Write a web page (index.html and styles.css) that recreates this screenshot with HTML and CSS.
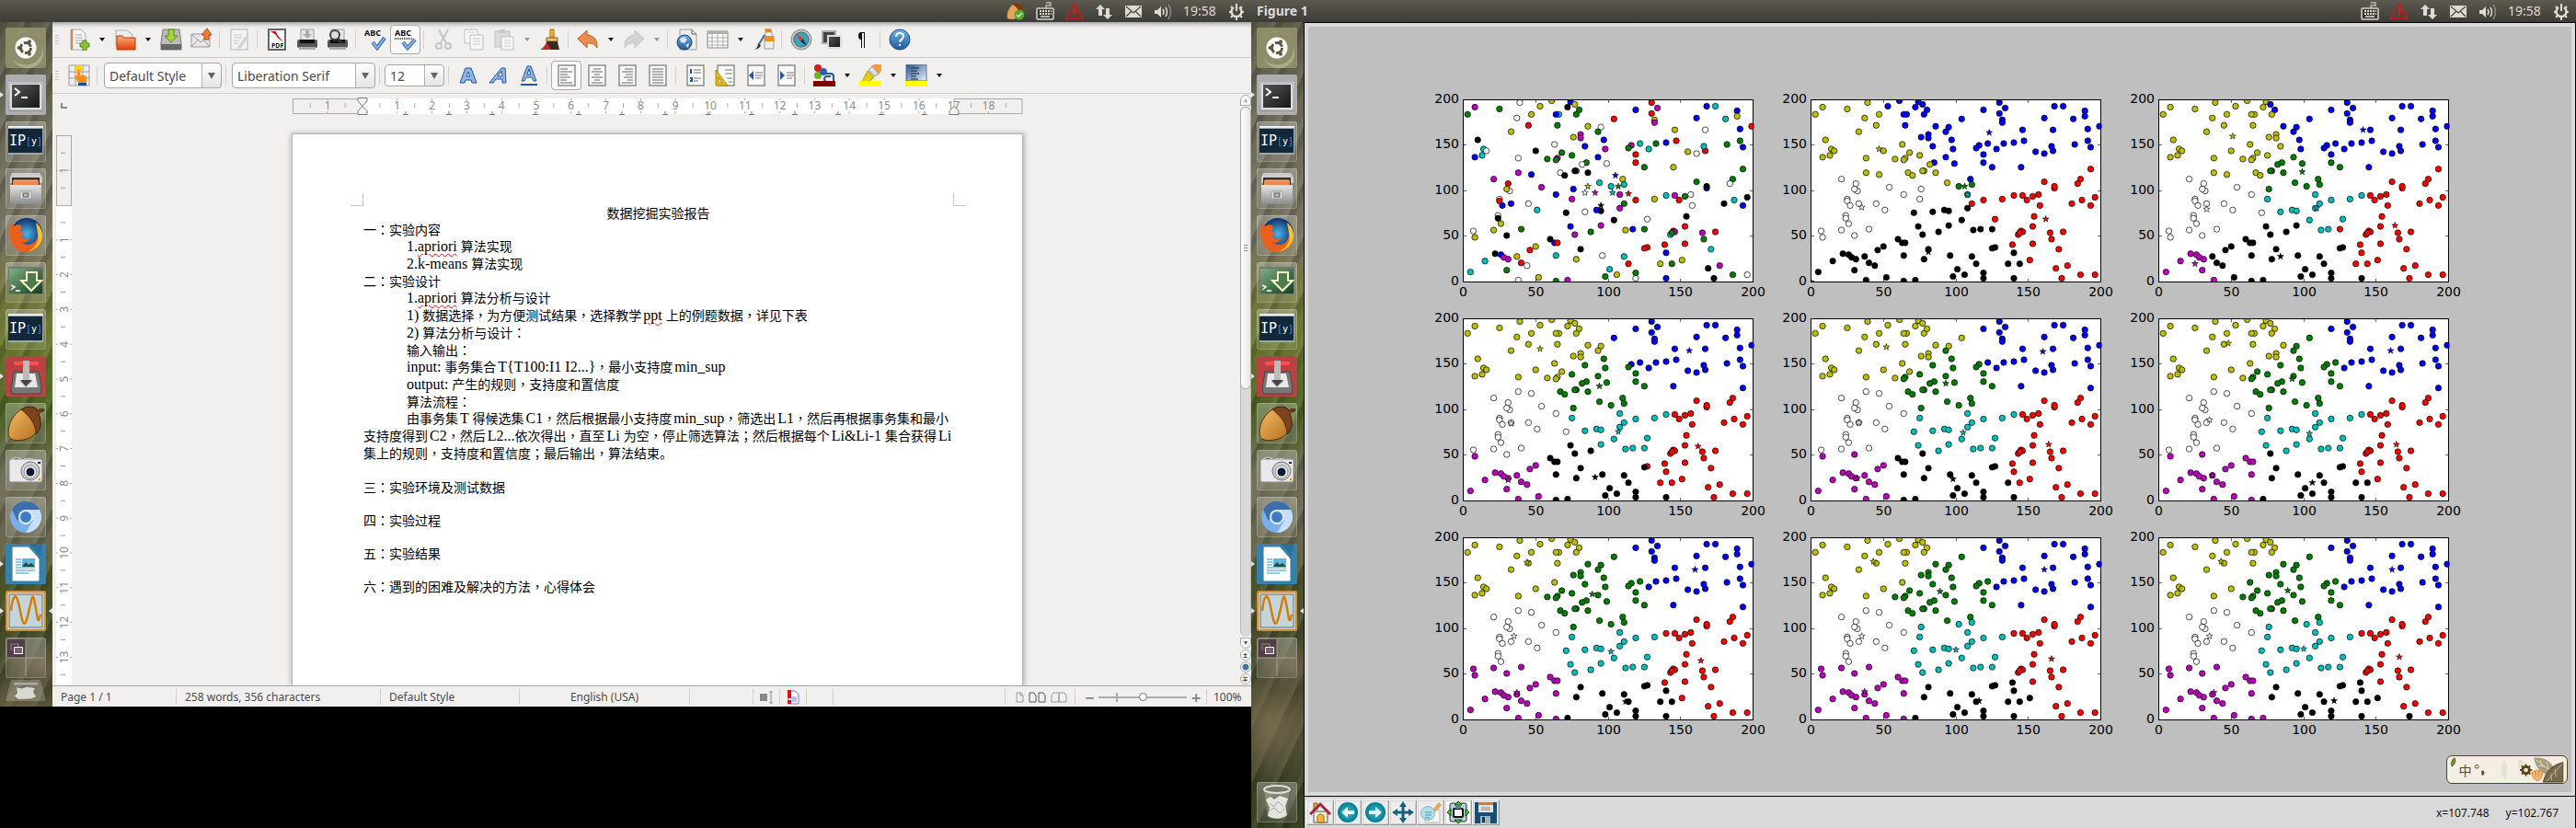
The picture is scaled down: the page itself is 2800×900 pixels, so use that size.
FILE: index.html
```html
<!DOCTYPE html>
<html lang="en">
<head>
<meta charset="utf-8">
<title>Figure 1</title>
<link rel="stylesheet" href="styles.css">
</head>
<body>
<svg class="defs" aria-hidden="true">
<defs>
<linearGradient id="gGrey" x1="0" y1="0" x2="0" y2="1"><stop offset="0" stop-color="#e6e6e6"/><stop offset="1" stop-color="#8b8b8b"/></linearGradient>
<linearGradient id="gDark" x1="0" y1="0" x2="1" y2="1"><stop offset="0" stop-color="#555"/><stop offset="1" stop-color="#161616"/></linearGradient>
<linearGradient id="gOrange" x1="0" y1="0" x2="0" y2="1"><stop offset="0" stop-color="#fbb07a"/><stop offset="1" stop-color="#e2410b"/></linearGradient>
<linearGradient id="gAcorn" x1="0" y1="0" x2="1" y2="1"><stop offset="0" stop-color="#f3bd63"/><stop offset="1" stop-color="#b86f1f"/></linearGradient>
<linearGradient id="gBlue" x1="0" y1="0" x2="0" y2="1"><stop offset="0" stop-color="#6fb0e4"/><stop offset="1" stop-color="#1c5a9c"/></linearGradient>
<linearGradient id="gPara" x1="0" y1="0" x2="1" y2="1"><stop offset="0" stop-color="#1d5396"/><stop offset="1" stop-color="#f0f4f8"/></linearGradient>
<linearGradient id="gGreen" x1="0" y1="0" x2="1" y2="1"><stop offset="0" stop-color="#7fae83"/><stop offset="1" stop-color="#143d1e"/></linearGradient>
<radialGradient id="gTeal"><stop offset="0" stop-color="#35c0d3"/><stop offset="1" stop-color="#08798f"/></radialGradient>
<radialGradient id="gFox"><stop offset="0" stop-color="#4db4ea"/><stop offset="1" stop-color="#0b2f6b"/></radialGradient>
</defs>
<symbol id="l-ubuntu" viewBox="0 0 44 44"><rect width="44" height="44" rx="3" fill="#8f8d69"/><path d="M4 24A18 17 0 0 1 40 18A15 14 0 0 0 4 24M40 22A18 17 0 0 1 8 34A16 15 0 0 0 40 22" fill="#aaa98b"/><circle cx="22" cy="22" r="11.500" fill="#fff"/><circle cx="22" cy="22" r="5.500" fill="none" stroke="#5b5940" stroke-width="3" stroke-dasharray="9.500 2"/><g fill="#5b5940"><circle cx="14.500" cy="22" r="2"/><circle cx="26" cy="15.300" r="2"/><circle cx="26" cy="28.700" r="2"/></g></symbol>
<symbol id="l-term" viewBox="0 0 44 44"><rect width="44" height="44" rx="3" fill="#adadb0"/><rect x="3" y="8" width="38" height="32" rx="2" fill="url(#gGrey)"/><rect x="4" y="9" width="36" height="30" rx="1" fill="#ddd" stroke="#999"/><rect x="7" y="11" width="30" height="25" fill="url(#gDark)"/><path d="M10 15l5 4-5 4" fill="none" stroke="#fff" stroke-width="2"/><path d="M17 25h7" stroke="#fff" stroke-width="2"/></symbol>
<symbol id="l-ipy" viewBox="0 0 44 44"><rect x="3" y="6" width="38" height="30" fill="#9ba8b0"/><rect x="3" y="8" width="37" height="26" fill="#12273a"/><path d="M3 6h38" stroke="#eee" stroke-width="2"/></symbol>
<symbol id="l-files" viewBox="0 0 44 44"><path d="M7 5h30l3 5v6H5v-6z" fill="#ccc"/><rect x="7" y="10" width="30" height="9" fill="#3a2c25"/><path d="M8 13h28v6H8z" fill="#f0864a"/><path d="M9 13h26" stroke="#ffc39a"/><rect x="5" y="18" width="34" height="21" rx="1" fill="url(#gGrey)"/><rect x="16" y="25" width="12" height="8" rx="1" fill="#e4e4e4" stroke="#999"/><rect x="19" y="27" width="6" height="4" fill="#bbb" stroke="#555"/></symbol>
<symbol id="l-fox" viewBox="0 0 44 44"><circle cx="23" cy="20" r="17" fill="url(#gFox)"/><path d="M4 18c0-4 1-7 3-10l2 4c4-3 8-2 9 1l-2 4c1 2 3 2 4 2l-3 4c1 3 7 3 9 1-1 5-6 7-9 5 5 5 17 4 18-8 1-5-1-9-2-12 5 4 7 9 7 14 0 10-8 17-18 17S4 32 4 18z" fill="#e8601c"/><path d="M33 8c5 4 7 9 7 14 0 9-7 16-15 17 9-5 12-12 10-20z" fill="#fbc22d"/></symbol>
<symbol id="l-down" viewBox="0 0 44 44"><rect x="3" y="5" width="38" height="30" fill="#717b73"/><rect x="4" y="7" width="36" height="27" fill="url(#gGreen)"/><path d="M23 11h11v9h5L28 31 17 20h6z" fill="#4c7b52" stroke="#f7f6c0" stroke-width="2"/><path d="M6 25l4 2-4 3M11 31h5" fill="none" stroke="#fff" stroke-width="1.500"/></symbol>
<symbol id="l-inst" viewBox="0 0 44 44"><rect width="44" height="44" rx="3" fill="#ba4141"/><rect x="9" y="6" width="27" height="4" rx="2" fill="#ff4e4e"/><path d="M9 17h27l3 18-1 6H7l-1-6z" fill="#777" stroke="#494949"/><path d="M12 19h20l3 15H10z" fill="#e8e8e8"/><path d="M19 5h7v22h4l-8 7-7-7h4z" fill="#bbb"/><path d="M16 26h13l-7 7z" fill="#444"/></symbol>
<symbol id="l-acorn" viewBox="0 0 44 44"><path d="M17 7C25 2 34 4 35 9c1-2 3-3 7-2l-1 2c-3 0-4 1-5 3 4 9 2 18-3 22z" fill="#7d431e" stroke="#3b1d0a"/><path d="M17 7C9 12 3 22 3 33c0 4 2 6 5 7 9 2 22-1 25-8C32 22 26 14 17 7z" fill="url(#gAcorn)" stroke="#55300d"/></symbol>
<symbol id="l-cam" viewBox="0 0 44 44"><rect x="4" y="10" width="36" height="25" rx="2" fill="#e9e9eb" stroke="#8a8a8c"/><path d="M7 10q5-3 10 0M20 10h10" stroke="#bbb" stroke-width="2"/><circle cx="27" cy="23" r="10" fill="#d0d0d2" stroke="#777"/><circle cx="27" cy="24" r="7" fill="#eee" stroke="#888"/><circle cx="27" cy="24" r="4.500" fill="#0d1b36"/><rect x="35" y="13" width="3" height="2" fill="#222"/><circle cx="37" cy="32" r="1.500" fill="#e59a20"/></symbol>
<symbol id="l-chrome" viewBox="0 0 44 44"><circle cx="22" cy="22" r="17" fill="#7aaee6"/><path d="M7 14A17 17 0 0 1 37 14H22L13 26z" fill="#3e6fab"/><path d="M22 14h15a17 17 0 0 1-15 25l8-13z" fill="#c8dff8"/><circle cx="22" cy="22" r="8" fill="#dcebfb"/><circle cx="22" cy="22" r="6" fill="#3f7ac6"/></symbol>
<symbol id="l-writer" viewBox="0 0 44 44"><rect width="44" height="44" rx="3" fill="#3782ad"/><path d="M26 0h14l-2 14z" fill="#2a6f98"/><path d="M7 3h18l12 13v25H7z" fill="#fff" stroke="#2f7aa5"/><g stroke="#2b95c4"><path d="M11 17h6M11 20h6M11 23h6M11 26h21M11 29h21M11 32h14"/></g><rect x="18" y="16" width="14" height="9" fill="#5cb4e0"/><path d="M18 25l4-5 3 3 3-2 4 4z" fill="#274c2a"/></symbol>
<symbol id="l-mpl" viewBox="0 0 44 44"><rect width="44" height="44" rx="3" fill="#c99139"/><rect x="3" y="3" width="38" height="38" fill="#c4d4d8" stroke="#fff"/><rect x="4" y="4" width="36" height="36" fill="none" stroke="#5d6b78"/><path d="M6 22C8 4 11 2 14 13s5 35 10 15 5-29 8-14 3 25 6 12" fill="none" stroke="#d17d0b" stroke-width="2.500"/></symbol>
<symbol id="l-work" viewBox="0 0 44 44"><rect x="2" y="2" width="20" height="20" fill="#523f43"/><path d="M22 2v40M2 22h40" stroke="#a5a595"/><path d="M6 14V7h8v3" fill="none" stroke="#888"/><rect x="9.500" y="10.500" width="9" height="7" fill="#7c5f70" stroke="#fff"/></symbol>
<symbol id="l-trash" viewBox="0 0 44 44"><path d="M8 8l4 30q10 4 19 0l5-30z" fill="#d2d2ca" opacity=".3"/><path d="M10 19l5-3 4 3 6-4 9 3-3 8 2 10q-10 7-21 1l2-9z" fill="#e4e4e1"/><path d="M14 23l5 4 4-6 6 6M13 32l6-4 6 6 5-5" fill="none" stroke="#aaa"/><ellipse cx="22" cy="8" rx="14" ry="4" fill="#77786a" stroke="#e0e0da" stroke-width="2"/></symbol>

<symbol id="p-key" viewBox="0 0 20 22"><path d="M11 8V5h5V2h-5" fill="none" stroke="#bbb8b0" stroke-width="1.500"/><rect x="1" y="8" width="18" height="12" rx="1" fill="#3a3935" stroke="#d6d3cb" stroke-width="1.500"/><path d="M4 11h13M4 14h13" stroke="#dfdbd2" stroke-width="2" stroke-dasharray="2 1"/><path d="M5 17h10" stroke="#dfdbd2" stroke-width="1.500"/></symbol>
<symbol id="p-warn" viewBox="0 0 20 22"><path d="M10 3L19 19H1z" fill="none" stroke="#e01010" stroke-width="1.500"/><path d="M10 8v6M10 15.500v2" stroke="#f01010" stroke-width="2"/></symbol>
<symbol id="p-net" viewBox="0 0 20 22"><path d="M6 4l5 5H8v7H4V9H1zM14 20l-5-5h3V8h4v7h3z" fill="#dfdbd2"/></symbol>
<symbol id="p-mail" viewBox="0 0 20 22"><rect x="1" y="5" width="18" height="13" fill="#dfdbd2"/><path d="M2 6l8 7 8-7M2 17l6-6M18 17l-6-6" fill="none" stroke="#494843" stroke-width="1.300"/></symbol>
<symbol id="p-vol" viewBox="0 0 20 22"><path d="M1 10h3l4-4v12l-4-4H1z" fill="#dfdbd2"/><path d="M10 9q2 3 0 6M13 7q3 5 0 10" fill="none" stroke="#dfdbd2" stroke-width="1.500"/><path d="M16 4q5 8 0 16" fill="none" stroke="#8b8981" stroke-width="1.500"/></symbol>
<symbol id="p-gear" viewBox="0 0 20 22"><path d="M13 7a5.500 5.500 0 1 1-6 0" fill="none" stroke="#dfdbd2" stroke-width="2.500"/><path d="M10 3v8" stroke="#dfdbd2" stroke-width="2"/><path d="M4 6l2 2M16 6l-2 2M2 12h3M15 12h3M4 18l2-2M16 18l-2-2M10 17v4" stroke="#dfdbd2" stroke-width="2"/></symbol>
<symbol id="p-acorn" viewBox="0 0 20 22"><path d="M7 4c4-3 8-1 8 1l4-2-2 5q2 5-2 8z" fill="#7b3c12"/><path d="M7 4C2 8 0 14 1 19q8 3 13-3Q13 7 7 4z" fill="#e6a456"/><circle cx="14" cy="15" r="5.500" fill="#4bae24"/><path d="M11 15l2 2 4-4" fill="none" stroke="#fff" stroke-width="1.500"/></symbol>
<symbol id="page" viewBox="0 0 24 24"><path d="M3 1h18v22H3z" fill="#fafafa" stroke="#8c8f88" stroke-width="1.500"/></symbol>
</svg>

<section class="screen writer-screen">
  <header class="panel">
    <div class="indicators">
      <svg><use href="#p-acorn"/></svg><svg><use href="#p-key"/></svg><svg><use href="#p-warn"/></svg><svg><use href="#p-net"/></svg><svg><use href="#p-mail"/></svg><svg><use href="#p-vol"/></svg><time>19:58</time><svg><use href="#p-gear"/></svg>
    </div>
  </header>
  <div class="desk">
    <nav class="launcher">
      <a class="tile" href="#"><svg><use href="#l-ubuntu"/></svg></a>
      <a class="tile open" href="#"><svg><use href="#l-term"/></svg></a>
      <a class="tile" href="#"><svg><use href="#l-ipy"/><text x="4" y="26" class="ip">IP</text><text x="22" y="25" class="br">[<tspan>y</tspan>]</text></svg></a>
      <a class="tile" href="#"><svg><use href="#l-files"/></svg></a>
      <a class="tile" href="#"><svg><use href="#l-fox"/></svg></a>
      <a class="tile" href="#"><svg><use href="#l-down"/></svg></a>
      <a class="tile" href="#"><svg><use href="#l-ipy"/><text x="4" y="26" class="ip">IP</text><text x="22" y="25" class="br">[<tspan>y</tspan>]</text></svg></a>
      <a class="tile open" href="#"><svg><use href="#l-inst"/></svg></a>
      <a class="tile" href="#"><svg><use href="#l-acorn"/></svg></a>
      <a class="tile" href="#"><svg><use href="#l-cam"/></svg></a>
      <a class="tile" href="#"><svg><use href="#l-chrome"/></svg></a>
      <a class="tile open" href="#"><svg><use href="#l-writer"/></svg></a>
      <a class="tile open focused" href="#"><svg><use href="#l-mpl"/></svg></a>
      <a class="tile" href="#"><svg><use href="#l-work"/></svg></a>
      <a class="tile folded" href="#"><svg preserveAspectRatio="none" viewBox="0 0 44 44"><path d="M6 0h32l6 44H0z" fill="#fff" opacity=".2"/><path d="M12 16l6 2 5-3 9 2-2 8 3 10-6 4-13 1-4-6 3-7z" fill="#d8d8d4"/><path d="M9 8h26" stroke="#aaa" stroke-width="5"/></svg></a>
    </nav>
    <main class="writer">
      <div class="toolbar">
        <i class="grip"></i>
        <button class="ico" aria-label="New"><svg viewBox="0 0 24 24"><path d="M3 1h11l5 5v17H3z" fill="#f4f4f4" stroke="#aaa"/><path d="M4 1v22" stroke="#e77f4c" stroke-width="2"/><path d="M8 7h7M8 10h8M8 13h8M8 16h5" stroke="#aaa"/><path d="M16 13h4v3h3v4h-3v4h-4v-4h-3v-4h3z" fill="#8cc63a" stroke="#4b8a10"/></svg></button><button class="drop" aria-label="New menu"></button>
        <button class="ico" aria-label="Open"><svg viewBox="0 0 24 24"><path d="M2 2h12l6 5v12H2z" fill="#eee" stroke="#aaa"/><path d="M3 8h6l2 2h12v13H3z" fill="url(#gOrange)" stroke="#b53b0b"/></svg></button><button class="drop" aria-label="Open menu"></button>
        <button class="ico" aria-label="Save"><svg viewBox="0 0 24 24"><path d="M3 1h18l2 15v7H1v-7z" fill="#bbb" stroke="#777"/><path d="M1 17h22v6H1z" fill="#666"/><path d="M9 1h6v7h4l-7 7-7-7h4z" fill="#a7d33d" stroke="#598a12"/></svg></button>
        <button class="ico" aria-label="Mail"><svg viewBox="0 0 24 24"><path d="M1 6h20v14H1z" fill="#e7e7e7" stroke="#999"/><path d="M1 6l10 9 10-9M1 20l7-8M21 20l-7-8" fill="none" stroke="#999"/><path d="M15 12V7h-3l6-7 5 7h-3v5z" fill="#ee7b3a" stroke="#b34910"/></svg></button>
        <i class="sep"></i>
        <button class="ico faded" aria-label="Edit"><svg viewBox="0 0 24 24"><use href="#page"/><path d="M6 7h9M6 10h9M6 13h6M6 16h5" stroke="#888"/><path d="M11 19l8-11 3 2-8 11-4 1z" fill="#aaa"/></svg></button>
        <i class="sep"></i>
        <button class="ico" aria-label="Export PDF"><svg viewBox="0 0 24 24"><path d="M3 1h18v22H3z" fill="#fff" stroke="#666" stroke-width="2"/><path d="M5 3h6q1 5 8 11-7-3-8-7z" fill="#d8131c"/><text x="6" y="21" font-size="7" font-weight="700">PDF</text></svg></button>
        <button class="ico" aria-label="Print"><svg viewBox="0 0 24 24"><path d="M5 1h14v12H5z" fill="#e6e6e6" stroke="#999"/><path d="M10 2h4v4h3l-5 5-5-5h3z" fill="#aaa"/><rect x="1" y="12" width="22" height="9" rx="2" fill="#555"/><rect x="4" y="12" width="16" height="4" fill="#111"/><rect x="3" y="20" width="18" height="3" fill="#aaa"/></svg></button>
        <button class="ico" aria-label="Preview"><svg viewBox="0 0 24 24"><path d="M5 1h14v12H5z" fill="#e6e6e6" stroke="#999"/><rect x="1" y="12" width="22" height="9" rx="2" fill="#555"/><rect x="4" y="12" width="16" height="4" fill="#111"/><rect x="3" y="20" width="18" height="3" fill="#aaa"/><circle cx="9" cy="7" r="5" fill="#ddd" stroke="#444" stroke-width="2"/><path d="M12 11l5 5" stroke="#333" stroke-width="3"/></svg></button>
        <i class="sep"></i>
        <button class="ico" aria-label="Spelling"><svg viewBox="0 0 24 24"><text x="0" y="8" font-size="9" font-weight="700">ABC</text><path d="M9 15l5 6 8-11" fill="none" stroke="#2d5a9b" stroke-width="4"/><path d="M9 15l5 6 8-11" fill="none" stroke="#8db6e8" stroke-width="2"/></svg></button>
        <button class="ico pressed" aria-label="AutoSpellcheck"><svg viewBox="0 0 24 24"><text x="0" y="8" font-size="9" font-weight="700">ABC</text><path d="M0 11h20" stroke="#e01010" stroke-width="2" stroke-dasharray="1 1"/><path d="M9 15l5 6 8-9" fill="none" stroke="#2d5a9b" stroke-width="4"/><path d="M9 15l5 6 8-9" fill="none" stroke="#8db6e8" stroke-width="2"/></svg></button>
        <i class="sep"></i>
        <button class="ico faded" aria-label="Cut"><svg viewBox="0 0 24 24"><path d="M7 1l8 15M17 1L9 16" stroke="#888" stroke-width="2"/><g fill="none" stroke="#888" stroke-width="2"><circle cx="7" cy="19" r="3"/><circle cx="17" cy="19" r="3"/></g></svg></button>
        <button class="ico faded" aria-label="Copy"><svg viewBox="0 0 24 24"><path d="M2 1h14v15H2z" fill="#fff" stroke="#777"/><path d="M8 7h14v16H8z" fill="#fff" stroke="#777"/><path d="M5 4h8M11 11h8M11 14h8M11 17h8" stroke="#999"/></svg></button>
        <button class="ico faded" aria-label="Paste"><svg viewBox="0 0 24 24"><path d="M2 3h16v17H2z" fill="#bbb" stroke="#777"/><path d="M7 1h6v4H7z" fill="#888"/><path d="M9 9h13v14H9z" fill="#fff" stroke="#777"/><path d="M12 13h7M12 16h7M12 19h7" stroke="#999"/></svg></button><button class="drop faded" aria-label="Paste menu"></button>
        <button class="ico" aria-label="Clone"><svg viewBox="0 0 24 24"><path d="M12 1h4v9h-4z" fill="#f4b13a" stroke="#a36b10"/><path d="M8 10h12v4H8z" fill="#e8c06a" stroke="#7b5a22"/><path d="M8 14h12l2 9H7z" fill="#3c2a28"/><path d="M1 23q5-3 7-8l5 8z" fill="#e01f26"/></svg></button>
        <i class="sep"></i>
        <button class="ico" aria-label="Undo"><svg viewBox="0 0 24 24"><path d="M1 11L11 2v5q12 1 11 14-3-6-11-5v5z" fill="#ee8a4d" stroke="#c35c1d"/></svg></button><button class="drop" aria-label="Undo menu"></button>
        <button class="ico faded" aria-label="Redo"><svg viewBox="0 0 24 24"><path d="M23 11L13 2v5Q1 8 2 21q3-6 11-5v5z" fill="#aaa" stroke="#888"/></svg></button><button class="drop faded" aria-label="Redo menu"></button>
        <i class="sep"></i>
        <button class="ico" aria-label="Hyperlink"><svg viewBox="0 0 24 24"><path d="M4 1h13l5 5v17H4z" fill="#eee" stroke="#999"/><path d="M17 1v5h5" fill="none" stroke="#555"/><circle cx="9" cy="15" r="8" fill="url(#gBlue)" stroke="#1c447a"/><path d="M4 11l5-2 3 3-3 4-4-1zM10 18l4-2-1 5z" fill="#dbe9f6"/></svg></button>
        <button class="ico" aria-label="Table"><svg viewBox="0 0 24 24"><path d="M1 3h22v18H1z" fill="#fff" stroke="#888"/><path d="M1 3h22v3H1z" fill="#a9b5a3"/><path d="M1 10h22M1 14h22M1 18h22M6 6v15M12 6v15M18 6v15" stroke="#aaa"/></svg></button><button class="drop" aria-label="Table menu"></button>
        <button class="ico" aria-label="Draw"><svg viewBox="0 0 24 24"><path d="M14 1h6l1 5 2 2v14H13V8l1-2z" fill="#f0f0f0" stroke="#999"/><path d="M14 0h6v4h-6zM13 8h10v6H13z" fill="#f08a1c"/><path d="M13 7L7 17" stroke="#4a69a5" stroke-width="2"/><path d="M2 23q4-2 4-7l3 2q-1 4-7 5z" fill="#333"/></svg></button>
        <i class="sep"></i>
        <button class="ico" aria-label="Navigator"><svg viewBox="0 0 24 24"><circle cx="12" cy="12" r="11" fill="#bdc3c4" stroke="#888"/><circle cx="12" cy="12" r="8" fill="#3aa5bb" stroke="#4b6871"/><path d="M6 5l8 6-3 3z" fill="#e03b28"/><path d="M18 19l-4-8-3 3z" fill="#0e3b66"/></svg></button>
        <button class="ico" aria-label="Gallery"><svg viewBox="0 0 24 24"><path d="M2 3h14v13H2z" fill="#444" stroke="#aaa" stroke-width="2"/><path d="M8 8h14v13H8z" fill="url(#gDark)" stroke="#ddd" stroke-width="2"/></svg></button>
        <button class="ico" aria-label="Marks"><svg viewBox="0 0 24 24"><path d="M9 4h6v17h-1V5h-2v16h-1v-9Q8 12 8 8t3-4z" fill="#111"/></svg></button>
        <i class="sep"></i>
        <button class="ico" aria-label="Help"><svg viewBox="0 0 24 24"><circle cx="12" cy="12" r="11" fill="url(#gBlue)" stroke="#1d5287"/><path d="M8 9q0-4 4-4t4 3q0 2-2 4-2 1-2 3" fill="none" stroke="#fff" stroke-width="2"/><path d="M11 17h2v2h-2z" fill="#fff"/></svg></button>
      </div>
      <div class="toolbar">
        <i class="grip"></i>
        <button class="ico" aria-label="Styles"><svg viewBox="0 0 24 24"><path d="M1 1h22v22H1zM1 8h22M1 15h22M8 1v22M16 1v22" fill="#eee" stroke="#999"/><path d="M8 1h8v7H8z" fill="#f7d708"/><path d="M10 6h3v6h6q2 1 1 8h-9l-4-7q1-2 3 0z" fill="#ff8d1e"/><path d="M11 20h9v3h-9z" fill="#1a4f96"/></svg></button>
        <i class="sep"></i>
        <label class="combo style"><select aria-label="Paragraph style"><option>Default Style</option></select></label>
        <i class="sep"></i>
        <label class="combo font"><select aria-label="Font name"><option>Liberation Serif</option></select></label>
        <i class="sep"></i>
        <label class="combo size"><select aria-label="Font size"><option>12</option></select></label>
        <i class="sep"></i>
        <button class="ico" aria-label="Bold"><svg viewBox="0 0 24 24"><path d="M3 20L9 4h6l6 16h-5l-1-3H9l-1 3zM10 13h4l-2-5z" fill="#8fb7e6" stroke="#24569c"/></svg></button>
        <button class="ico" aria-label="Italic"><svg viewBox="0 0 24 24"><path d="M2 20L15 4h4l1 16h-4v-4H9l-3 4zM11 13h5l-1-6z" fill="#8fb7e6" stroke="#24569c"/></svg></button>
        <button class="ico" aria-label="Underline"><svg viewBox="0 0 24 24"><path d="M4 18L10 2h4l6 16h-3l-2-4H9l-2 4zM10 11h4l-2-6z" fill="#8fb7e6" stroke="#24569c"/><path d="M3 22h18" stroke="#24569c" stroke-width="2"/></svg></button>
        <i class="sep"></i>
        <button class="ico pressed" aria-label="Align left"><svg viewBox="0 0 24 24"><use href="#page"/><path d="M5 5h8M5 8h13M5 11h8M5 14h11M5 17h7M5 20h13" stroke="#666"/></svg></button>
        <button class="ico" aria-label="Centre"><svg viewBox="0 0 24 24"><use href="#page"/><path d="M8 5h8M6 8h12M9 11h6M6 14h12M9 17h6M6 20h12" stroke="#666"/></svg></button>
        <button class="ico" aria-label="Align right"><svg viewBox="0 0 24 24"><use href="#page"/><path d="M9 5h9M6 8h12M10 11h8M8 14h10M12 17h6M6 20h12" stroke="#666"/></svg></button>
        <button class="ico" aria-label="Justify"><svg viewBox="0 0 24 24"><use href="#page"/><path d="M6 5h12M6 8h12M6 11h12M6 14h12M6 17h12M6 20h12" stroke="#666"/></svg></button>
        <i class="sep"></i>
        <button class="ico" aria-label="Numbering"><svg viewBox="0 0 24 24"><use href="#page"/><path d="M10 6h8M10 9h8M10 15h8M10 18h5" stroke="#777"/><path d="M7 5v5M6 15h2v3h-2" fill="none" stroke="#24569c" stroke-width="2"/></svg></button>
        <button class="ico" aria-label="Bullets"><svg viewBox="0 0 24 24"><use href="#page"/><path d="M11 6h8M11 10h8M13 15h6M15 19h4" stroke="#777"/><path d="M1 6v17h13zM4 14v6h4z" fill="#e2bd18" fill-rule="evenodd" stroke="#a98a08"/></svg></button>
        <button class="ico" aria-label="Decrease indent"><svg viewBox="0 0 24 24"><use href="#page"/><path d="M11 9h8M11 12h8M11 15h6" stroke="#777"/><path d="M9 7v10l-5-5z" fill="#24569c"/></svg></button>
        <button class="ico" aria-label="Increase indent"><svg viewBox="0 0 24 24"><use href="#page"/><path d="M12 9h8M12 12h8M12 15h6" stroke="#777"/><path d="M5 7v10l5-5z" fill="#24569c"/></svg></button>
        <i class="sep"></i>
        <button class="ico" aria-label="Font colour"><svg viewBox="0 0 24 24"><circle cx="5" cy="4" r="4" fill="#d91d1d"/><circle cx="5" cy="12" r="4" fill="#66b824"/><circle cx="11" cy="8" r="4" fill="#3060b0"/><path d="M13 10h6q3 0 3 3v6h-7q-3 0-3-3t3-3h4" fill="none" stroke="#2d5596" stroke-width="2"/><path d="M0 18h24v6H0z" fill="#800000"/></svg></button><button class="drop" aria-label="Font colour menu"></button>
        <button class="ico" aria-label="Highlight"><svg viewBox="0 0 24 24"><path d="M13 2l3-2h8v7l-4 5z" fill="#ff9a3b"/><path d="M14 2l7 8-4 3-7-7z" fill="#ddd" stroke="#999"/><path d="M9 7l7 7-6 5H3z" fill="#e8c916" stroke="#b99a05"/><path d="M0 18h24v6H0z" fill="#ff0"/></svg></button><button class="drop" aria-label="Highlight menu"></button>
        <button class="ico" aria-label="Background"><svg viewBox="0 0 24 24"><path d="M1 0h22v18H1z" fill="url(#gPara)" stroke="#678"/><path d="M6 4h9M6 7h7M6 10h9M6 13h6M6 16h8" stroke="#123"/><path d="M0 18h24v6H0z" fill="#ff0"/></svg></button><button class="drop" aria-label="Background menu"></button>
      </div>
      <div class="work">
        <div class="side"><i class="tabmark"></i><svg id="vruler" class="vruler"></svg></div>
        <div class="canvas">
          <svg id="hruler" class="hruler" viewBox="0 0 795 24"></svg>
          <article class="page">
            <i class="corner tl"></i><i class="corner tr"></i>
            <p class="title">数据挖掘实验报告</p>
            <p>一<span class="mid">：</span>实验内容</p>
            <p class="in mix"><span class="en">1.<u>apriori</u> </span>算法实现</p>
            <p class="in mix"><span class="en">2.k-means </span>算法实现</p>
            <p>二<span class="mid">：</span>实验设计</p>
            <p class="in mix"><span class="en">1.<u>apriori</u> </span>算法分析与设计</p>
            <p class="in mix"><span class="en">1) </span>数据选择<span class="mid">，</span>为方便测试结果<span class="mid">，</span>选择教学<span class="en pre"><u>ppt</u> </span>上的例题数据<span class="mid">，</span>详见下表</p>
            <p class="in mix"><span class="en">2) </span>算法分析与设计<span class="mid">：</span></p>
            <p class="in">输入输出<span class="mid">：</span></p>
            <p class="in mix"><span class="en">input: </span>事务集合<span class="en pre">T{T100:I1 I2...}</span><span class="mid">，</span>最小支持度<span class="en pre">min_sup</span></p>
            <p class="in mix"><span class="en">output: </span>产生的规则<span class="mid">，</span>支持度和置信度</p>
            <p class="in">算法流程<span class="mid">：</span></p>
            <p class="in mix">由事务集<span class="en pre">T </span>得候选集<span class="en pre">C1</span><span class="mid">，</span>然后根据最小支持度<span class="en pre">min_sup</span><span class="mid">，</span>筛选出<span class="en pre">L1</span><span class="mid">，</span>然后再根据事务集和最小</p>
            <p class="mix">支持度得到<span class="en pre">C2</span><span class="mid">，</span>然后<span class="en pre">L2...</span>依次得出<span class="mid">，</span>直至<span class="en pre">Li </span>为空<span class="mid">，</span>停止筛选算法<span class="mid">；</span>然后根据每个<span class="en pre">Li&amp;Li-1 </span>集合获得<span class="en pre">Li</span></p>
            <p class="mix">集上的规则<span class="mid">，</span>支持度和置信度<span class="mid">；</span>最后输出<span class="mid">，</span>算法结束。</p>
            <p class="blank"></p>
            <p>三<span class="mid">：</span>实验环境及测试数据</p>
            <p class="blank"></p>
            <p>四<span class="mid">：</span>实验过程</p>
            <p class="blank"></p>
            <p>五<span class="mid">：</span>实验结果</p>
            <p class="blank"></p>
            <p>六<span class="mid">：</span>遇到的困难及解决的方法<span class="mid">，</span>心得体会</p>
          </article>
        </div>
        <div class="scroll">
          <button class="step up" aria-label="Scroll up"></button>
          <div class="trough"><div class="thumb"></div></div>
          <button class="step down" aria-label="Scroll down"></button>
          <button class="dot" aria-label="Previous page">±</button>
          <button class="dot nav" aria-label="Navigation"></button>
          <button class="dot" aria-label="Next page">∓</button>
        </div>
      </div>
      <footer class="status">
        <span class="s-page">Page 1 / 1</span>
        <span class="s-words">258 words, 356 characters</span>
        <span class="s-style">Default Style</span>
        <span class="s-lang">English (USA)</span>
        <span class="s-gap"></span>
        <span class="s-ico"><svg viewBox="0 0 16 16"><path d="M1 4h8v8H1z" fill="#888"/><path d="M11 2h4M13 2v12M11 14h4" stroke="#888"/></svg></span>
        <span class="s-ico"><svg viewBox="0 0 16 16"><path d="M3 1h7l4 4v10H3z" fill="#fff" stroke="#77d"/><path d="M6 8h6M6 10h6M6 12h6" stroke="#77d"/><path d="M2 0h4v9H2zM2 11h4v4H2z" fill="#e01010"/></svg></span>
        <span class="s-ico"></span>
        <span class="s-fill"></span>
        <span class="s-views"><svg viewBox="0 0 56 12" fill="none"><path d="M1 1h5l2 3v7H1zM5 1v3h3M39 11V4l2-3h6v10zM47 11V1h6l2 3v7z" stroke="#999"/><path d="M15 1h5l2 3v7h-7zM25 1h5l2 3v7h-7z" stroke="#555"/></svg></span>
        <span class="s-zoom"><button aria-label="Zoom out">−</button><input type="range" min="0" max="100" value="50" aria-label="Zoom"><button aria-label="Zoom in">+</button></span>
        <span class="s-pct">100%</span>
      </footer>
    </main>
  </div>
</section>

<section class="screen plot-screen">
  <header class="panel">
    <h1>Figure 1</h1>
    <div class="indicators">
      <svg><use href="#p-key"/></svg><svg><use href="#p-warn"/></svg><svg><use href="#p-net"/></svg><svg><use href="#p-mail"/></svg><svg><use href="#p-vol"/></svg><time>19:58</time><svg><use href="#p-gear"/></svg>
    </div>
  </header>
  <div class="desk">
    <nav class="launcher">
      <a class="tile" href="#"><svg><use href="#l-ubuntu"/></svg></a>
      <a class="tile open" href="#"><svg><use href="#l-term"/></svg></a>
      <a class="tile" href="#"><svg><use href="#l-ipy"/><text x="4" y="26" class="ip">IP</text><text x="22" y="25" class="br">[<tspan>y</tspan>]</text></svg></a>
      <a class="tile" href="#"><svg><use href="#l-files"/></svg></a>
      <a class="tile" href="#"><svg><use href="#l-fox"/></svg></a>
      <a class="tile" href="#"><svg><use href="#l-down"/></svg></a>
      <a class="tile" href="#"><svg><use href="#l-ipy"/><text x="4" y="26" class="ip">IP</text><text x="22" y="25" class="br">[<tspan>y</tspan>]</text></svg></a>
      <a class="tile open" href="#"><svg><use href="#l-inst"/></svg></a>
      <a class="tile" href="#"><svg><use href="#l-acorn"/></svg></a>
      <a class="tile" href="#"><svg><use href="#l-cam"/></svg></a>
      <a class="tile" href="#"><svg><use href="#l-chrome"/></svg></a>
      <a class="tile open" href="#"><svg><use href="#l-writer"/></svg></a>
      <a class="tile open focused" href="#"><svg><use href="#l-mpl"/></svg></a>
      <a class="tile" href="#"><svg><use href="#l-work"/></svg></a>
      <a class="tile last" href="#"><svg><use href="#l-trash"/></svg></a>
    </nav>
    <main class="plotwin">
      <div class="figure">
        <div class="axes" id="axes"></div>
        <div class="ime"><svg viewBox="0 0 132 31">
          <path d="M62 4q8 8 2 24-8-8-2-24M80 3q10 4 6 18-10-6-6-18" fill="#e7e1cf"/>
          <path d="M97 2q20-3 27 20-22 3-27-20" fill="#a89c7e"/><path d="M99 4l22 16M104 4l3 7M112 6l2 9M102 11l8 1" stroke="#e0d8c0"/>
          <path d="M108 30Q112 12 131 7v23z" fill="#776a4e" stroke="#4d4028"/><path d="M112 29l18-20M117 20l1 8M122 15l1 9" stroke="#c6b996"/>
          <path d="M94 19q7-7 14 0-1 9-7 10-6-2-7-10" fill="#e79a4c"/><path d="M97 18q0 6 3 9M101 17v10M105 18q0 6-3 9" stroke="#fbe0b4" fill="none"/>
          <circle cx="88" cy="16" r="4" fill="none" stroke="#5b431c" stroke-width="3"/><path d="M88 9v3M88 20v3M81 16h3M92 16h3M83 11l2 2M91 19l2 2M83 21l2-2M91 13l2-2" stroke="#5b431c" stroke-width="2"/>
          <circle cx="31" cy="12" r="2" fill="none" stroke="#5b431c"/><path d="M37 17q4 0 1 5l-1-1z" fill="#5b431c" stroke="#5b431c"/>
          <path d="M2 12Q0 5 5 2q3 5-3 10" fill="#7a9427" stroke="#47581a"/>
          <text x="10" y="22" font-size="15" fill="#5b431c">中</text></svg></div>
      </div>
      <div class="navbar">
        <button aria-label="Home"><svg viewBox="0 0 24 24"><path d="M5 2h4v7H5z" fill="#e8aa4e" stroke="#84501b"/><path d="M5 11h15v12H5z" fill="#f3ead8" stroke="#555"/><path d="M1 14L12 3l11 11" fill="none" stroke="#a8223a" stroke-width="3"/><path d="M9 23v-7q4-4 7 0v7z" fill="#f6b53b" stroke="#9b641b"/></svg></button>
        <button aria-label="Back"><svg viewBox="0 0 24 24"><circle cx="12" cy="12" r="11" fill="url(#gTeal)"/><path d="M5 12l7-6v4h7v4h-7v4z" fill="#e6fbff"/></svg></button>
        <button aria-label="Forward"><svg viewBox="0 0 24 24"><circle cx="12" cy="12" r="11" fill="url(#gTeal)"/><path d="M19 12l-7-6v4H5v4h7v4z" fill="#e6fbff"/></svg></button>
        <button aria-label="Pan"><svg viewBox="0 0 24 24"><path d="M12 4v16M4 12h16" stroke="#14617f" stroke-width="3"/><path d="M12 0l4 6H8zM12 24l4-6H8zM0 12l6-4v8zM24 12l-6-4v8z" fill="#14617f"/></svg></button>
        <button aria-label="Zoom to rectangle"><svg viewBox="0 0 24 24"><path d="M6 9h16v14H6z" fill="#f4f4f4" stroke="#bbb"/><path d="M14 9l7-8 3 3-7 8z" fill="#f0a24d"/><circle cx="9" cy="13" r="7.500" fill="#b3dde6" stroke="#7dbdcb"/><path d="M6 12h7M6 15h7M6 18h5" stroke="#4e92a8"/></svg></button>
        <button class="white" aria-label="Subplots"><svg viewBox="0 0 24 24"><rect x="3" y="2" width="18" height="20" rx="2" fill="#b5d3df" stroke="#222"/><rect x="7" y="8" width="10" height="9" rx="1" fill="#fff" stroke="#111" stroke-width="2"/><path d="M9 5h6v3H9z" fill="#5a7f90"/><path d="M12 0l4 4H8zM12 24l4-4H8zM0 12l4-4v8zM24 12l-4-4v8z" fill="#4cc43c" stroke="#16460f"/></svg></button>
        <button aria-label="Save figure"><svg viewBox="0 0 24 24"><path d="M0 1h24v23H0z" fill="#145072"/><path d="M4 1h16v11H4z" fill="#e0e4e6"/><path d="M4 1h16v3H4z" fill="#c67d4c"/><path d="M7 7h10M7 9h10" stroke="#888"/><path d="M6 16h11v8H6z" fill="#9fb2bd"/><path d="M8 17h3v6H8z" fill="#143c54"/></svg></button>
        <output><span>x=107.748</span><span>y=102.767</span></output>
      </div>
    </main>
  </div>
</section>
<script src="plots.js"></script>
</body>
</html>
```
FILE: styles.css
```css
* { box-sizing: border-box; }
body {
  margin: 0;
  display: flex;
  min-height: 100vh;
  background: #000;
  font-family: "Noto Sans", sans-serif;
  font-size: 12px;
  color: #4a4a4a;
}
button, select, input { font: inherit; color: inherit; margin: 0; }
button { border: 0; background: none; padding: 0; }
p { margin: 0; }
.defs { position: absolute; width: 0; height: 0; }

.screen { display: flex; flex-direction: column; min-width: 0; }
.writer-screen { flex: 1360 1 0; align-self: flex-start; }
.plot-screen { flex: 1440 1 0; }
.desk { flex: 1; display: flex; min-height: 0; }

.panel {
  height: 24px;
  display: flex;
  align-items: center;
  padding: 0 6px;
  background: linear-gradient(#5d5b50, #4f4d46 40%, #3d3c38);
  color: #dfdbd2;
}
.panel h1 { margin: 0; font-size: 14px; font-weight: 700; line-height: 24px; }
.indicators { margin-left: auto; display: flex; align-items: center; gap: 12px; }
.indicators svg { width: 20px; height: 22px; }
.indicators time { width: 36px; font-size: 14px; line-height: 24px; text-align: center; white-space: nowrap; }

.launcher {
  width: 57px;
  flex: none;
  display: flex;
  flex-direction: column;
  gap: 7px;
  padding: 6px 0 6px 6px;
  background:
    radial-gradient(ellipse 60px 40px at 10px 500px, rgba(120,115,95,.8), transparent),
    radial-gradient(ellipse 50px 60px at 20px 765px, rgba(130,115,85,.8), transparent),
    radial-gradient(ellipse 40px 30px at 45px 700px, rgba(110,95,70,.8), transparent),
    repeating-linear-gradient(115deg, rgba(0,0,0,.14) 0 5px, transparent 9px 17px, rgba(255,255,255,.06) 21px 25px),
    linear-gradient(#5c5b49 0, #6d6a58 120px, #77735f 240px, #74763f 290px, #68762e 350px, #4c6222 420px, #6a6852 500px, #69664c 570px, #4c5428 610px, #474a2c 680px, #4c4a32 760px, #36401f 876px);
}
.tile {
  position: relative;
  display: block;
  width: 44px;
  height: 44px;
  flex: none;
  border-radius: 3px;
  background: linear-gradient(rgba(255,255,255,.28), rgba(255,255,255,.1));
  box-shadow: inset 0 0 0 1px rgba(255,255,255,.2);
}
.tile svg { display: block; width: 100%; height: 100%; }
.ip { font: 15px "DejaVu Sans Mono", monospace; fill: #fff; }
.br { font: 10px "DejaVu Sans Mono", monospace; fill: #4a8cc4; }
.br tspan { fill: #fff; }
.tile.open::before, .tile.focused::after {
  content: "";
  position: absolute;
  top: 19px;
  left: -6px;
  border: 3px solid transparent;
  border-left: 4px solid #e4e4e4;
  border-right: 0;
}
.tile.focused::after { left: 47px; border: 3px solid transparent; border-right: 4px solid #e4e4e4; border-left: 0; }
.tile.folded { height: 23px; margin-top: -5px; background: none; box-shadow: none; }
.tile.last { margin-top: auto; }

.writer { flex: 1; min-width: 0; display: flex; flex-direction: column; background: #f1f0ef; }
.toolbar {
  height: 39px;
  flex: none;
  display: flex;
  align-items: center;
  border-bottom: 1px solid #d0cecb;
}
.toolbar:first-child { box-shadow: inset 0 5px 5px -3px #999; }
.grip { width: 12px; height: 10px; flex: none; background: repeating-linear-gradient(#c5c3c0 0 1px, transparent 1px 3px) 3px 0 / 4px 10px no-repeat; }
.sep { width: 8px; height: 20px; flex: none; background: linear-gradient(#d2d0cd, #d2d0cd) 3px 0 / 1px 20px no-repeat; }
.ico { width: 33px; height: 32px; flex: none; display: grid; place-items: center; border-radius: 4px; }
.ico svg { width: 24px; height: 24px; }
.ico text { fill: #111; }
.ico.pressed { border: 1px solid #aaa; background: #f8f8f7; }
.faded { opacity: .4; }
.drop { width: 17px; height: 32px; flex: none; display: grid; place-items: center; }
.drop::before { content: ""; border: 3px solid transparent; border-top: 4px solid #111; border-bottom: 0; }
.combo {
  position: relative;
  flex: none;
  height: 28px;
  border: 1px solid #a9a6a2;
  border-radius: 4px;
  background: linear-gradient(#fff, #fff) 0 0 / calc(100% - 21px) 100% no-repeat, linear-gradient(#fdfdfd, #e6e5e4);
}
.combo select { appearance: none; width: 100%; height: 100%; border: 0; background: none; padding: 0 0 0 5px; font-size: 14px; }
.combo::after { content: ""; position: absolute; top: 10px; right: 6px; border: 4px solid transparent; border-top: 7px solid #666; border-bottom: 0; }
.combo::before { content: ""; position: absolute; top: 0; bottom: 0; right: 20px; border-left: 1px solid #b5b3b0; }
.combo.style { width: 128px; margin: 0 1px 0 3px; }
.combo.font { width: 156px; margin: 0 1px 0 2px; }
.combo.size { width: 65px; height: 24px; margin: 0 1px; }
.combo.size::after { top: 8px; }

.work { flex: 1; display: flex; min-height: 0; }
.side { width: 21px; flex: none; display: flex; flex-direction: column; padding-left: 4px; }
.tabmark { width: 7px; height: 6px; margin: 10px 0 29px 5px; border: solid #888; border-width: 0 0 2px 2px; }
.vruler { width: 17px; flex: 1 1 0; min-height: 0; background: #fff; display: block; }
.canvas { flex: 1 1 0; min-width: 0; display: flex; flex-direction: column; align-items: center; padding-left: 4px; overflow: hidden; }
.hruler { width: 795px; height: 24px; margin: 2px 0 17px; flex: none; }
.work svg text { font-size: 12px; fill: #8a8a8a; text-anchor: middle; }
.page {
  position: relative;
  width: 795px;
  flex: 1;
  padding: 76px 75px 0 77px;
  background: #fff;
  border: 1px solid #b5b5b5;
  border-bottom: 0;
  box-shadow: 2px 0 5px #bbb, -2px 0 5px #ccc;
  color: #000;
  font-family: "Noto Sans CJK SC", sans-serif;
  font-size: 14px;
  white-space: nowrap;
}
.page p { height: 18px; line-height: 18px; }
.page p.mix { height: 19px; line-height: 19px; }
.page .title { text-align: center; }
.page .in { padding-left: 47px; }
.en { font-family: "Liberation Serif", serif; font-size: 16px; white-space: pre; }
.pre { margin-left: 2px; }
.mid { font-family: "Noto Sans CJK TC", sans-serif; }
u { text-decoration: underline wavy #e01010 1px; text-underline-offset: 2px; }
.corner { position: absolute; top: 64px; width: 14px; height: 14px; border-bottom: 1px solid #c4c4c4; }
.tl { left: 63px; border-right: 1px solid #c4c4c4; }
.tr { right: 61px; border-left: 1px solid #c4c4c4; }

.scroll { width: 13px; flex: none; display: flex; flex-direction: column; align-items: center; gap: 1px; padding: 1px 0; }
.step { width: 12px; height: 12px; border: 1px solid #aaa; background: #f7f7f7; display: grid; place-items: center; }
.up { border-radius: 6px 6px 0 0; }
.down { border-radius: 0 0 6px 6px; }
.step::before { content: ""; border: 2px solid transparent; }
.up::before { border-bottom: 4px solid #aaa; border-top: 0; }
.down::before { border-top: 4px solid #555; border-bottom: 0; }
.trough { flex: 1; width: 12px; border: 1px solid #bbb; border-bottom-width: 0; background: #dad9d7; border-radius: 6px; }
.thumb { height: 53%; border-radius: 6px; box-shadow: 0 0 0 1px #aaa; background: repeating-linear-gradient(#888 0 1px, transparent 1px 3px) center / 4px 7px no-repeat, linear-gradient(90deg, #fff, #e8e7e6); }
.dot { width: 12px; height: 12px; border: 1px solid #aaa; border-radius: 6px; background: #fafafa; font-size: 8px; font-weight: 700; line-height: 8px; }
.nav { background: radial-gradient(#3d78a8 3px, #fafafa 4px); }

.status { height: 23px; flex: none; display: flex; border-top: 1px solid #a5a3a0; padding: 3px 0 2px; line-height: 17px; }
.status > span { flex: none; border-right: 1px solid #d0cecb; padding-left: 9px; white-space: nowrap; }
.status svg, .s-zoom { display: block; }
.s-page { width: 135px; }
.s-words { width: 222px; }
.s-style { width: 151px; }
.status .s-lang { width: 185px; padding: 0; text-align: center; }
.s-gap { width: 69px; }
.status .s-ico { width: 29px; padding: 1px 6px; }
.s-ico svg { width: 16px; height: 16px; }
.status .s-fill { flex: 1; }
.status .s-views { width: 76px; padding: 3px 10px 0 11px; }
.s-views svg { width: 56px; height: 12px; }
.status .s-zoom { display: flex; align-items: center; gap: 5px; width: 143px; padding: 0 6px 0 10px; }
.s-zoom button { width: 10px; font-size: 18px; font-weight: 700; line-height: 16px; color: #888; }
.s-zoom input { flex: 1; min-width: 0; appearance: none; height: 16px; background: linear-gradient(#aaa, #aaa) 0 7px / 100% 2px no-repeat, linear-gradient(#aaa, #aaa) 19px 3px / 2px 10px no-repeat; }
.s-zoom input::-webkit-slider-thumb { appearance: none; width: 9px; height: 9px; border: 1px solid #777; border-radius: 50%; background: #fff; }
.status .s-pct { width: 48px; padding-left: 7px; border: 0; }

.plotwin { flex: 1; min-width: 0; display: flex; flex-direction: column; border: 1px solid #000; border-width: 1px 1px 0 1px; background: #d9d9d9; }
.figure { position: relative; flex: 1; margin: 4px; background: #bfbfbf; padding: 79px 133px 0 168px; }
.axes { display: grid; grid-template-columns: repeat(3, 1fr); gap: 39px 62px; }
.axes svg { display: block; width: 100%; overflow: visible; font-family: "DejaVu Sans", sans-serif; font-size: 14px; }
.ime { position: absolute; right: 4px; bottom: 9px; width: 132px; height: 31px; border: 1px solid #5b431c; border-radius: 6px; background: #f3efe5; overflow: hidden; }
.ime svg { display: block; width: 100%; height: 100%; font-family: "Noto Sans CJK SC", sans-serif; }
.navbar { height: 35px; flex: none; display: flex; align-items: center; border-top: 1px solid #000; padding-left: 2px; }
.navbar button { width: 30px; height: 28px; display: grid; place-items: center; background: #ececec; border: 1px solid; border-color: #fff #999 #999 #fff; outline: 1px solid #d0d0d0; outline-offset: -2px; }
.navbar button.white { background: #fff; }
.navbar svg { width: 24px; height: 24px; }
.navbar output { margin-left: auto; padding-right: 18px; display: flex; gap: 18px; color: #111; }
```
FILE: plots.js
```js
const NS = 'http://www.w3.org/2000/svg';
const COLORS = { b: '#0000ff', g: '#008000', r: '#ff0000', c: '#00bfbf', m: '#bf00bf', y: '#bfbf00', k: '#000', w: '#fff' };

const POINTS = `8,192m 3,184g 25,190g 39,197w 37,180w 33,165y 45,172r 47,184y 53,193y 61,199y 66,184c 64,184b 65,172g 74,198b 72,192k
77,195y 80,189g 78,184g 86,171y 95,170w 93,165g 81,162m 81,158m 76,159y 97,156b 84,149b 98,146m 63,151w 50,144k 10,156k 14,146c 16,144w
13,139c 8,137b 38,136w 58,135g 65,136m 64,134g 68,142g 75,139g 93,137b 85,131g 82,129w 99,130w 38,120m 47,118b 67,120w 70,117k 78,122g
77,122k 86,120k 21,113m 31,108r 32,100w 30,102y 54,104m 76,102b 94,109c 64,96b 75,91m 25,91w 25,89r 27,84b 33,86b 45,86w 51,79c 24,73w
24,70k 26,64y 21,57y 7,56w 8,49y 30,51k 40,58g 71,76k 84,77w 92,79b 95,78k 74,61b 95,62m 88,55g 77,52m 60,47k 63,43b 65,43r 50,39y 46,35r
81,36k 22,31k 26,30b 28,27m 31,25m 37,28y 40,21r 44,18w 15,23c 5,11c 30,13g 38,2w 52,5y 64,1g 72,2m 64,29c 78,25y 96,29w 98,6g 101,14c
106,8y 104,179r 119,189b 130,197r 134,191m 130,185r 132,178y 132,175m 146,167y 147,155r 140,153b 133,152g 122,152c 116,150m 114,147g
128,146c 119,140r 119,131r 125,126g 145,126y 168,193b 174,193c 189,188b 189,182y 181,179c 161,180b 191,168b 199,171r 167,167w 191,155g
193,148b 182,151g 167,144r 166,149c 155,143y 161,141w 193,124g 186,113g 184,108w 161,110g 168,103b 168,105k 110,113y 111,107c 102,105c
108,96m 119,90r 132,91y 140,95c 146,95m 149,90r 157,96w 153,94g 158,84w 196,93k 187,90c 193,84b 180,86k 111,86g 108,81m 104,68k 127,69w
154,72k 153,61r 112,57y 117,58b 125,58g 143,52c 145,56r 146,55m 144,54g 165,54m 174,55r 166,47g 153,42r 139,41r 127,38r 125,37r 140,32b
171,36c 111,28c 114,20r 136,20y 144,20g 151,24y 119,4w 119,10g 140,4b 169,15k 177,18m 186,8g 173,4k 196,8w`
  .split(/\s+/).map(s => { const [x, y] = s.slice(0, -1).split(',').map(Number); return { x, y, c: s.slice(-1) }; });

const CENTRES = [
  { b: [105, 117], y: [86, 105], g: [107, 105], w: [84, 98], m: [91, 98], c: [103, 98], r: [114, 97], k: [95, 84] },
  { b: [123, 164], y: [47, 146], g: [106, 105], w: [35, 82], m: [0, 0], c: [108, 96], r: [162, 69], k: [81, 33] },
  { b: [141, 167], y: [51, 160], g: [99, 121], w: [33, 80], m: [25, 20], c: [109, 81], r: [163, 62], k: [84, 28] },
  { b: [156, 165], y: [53, 167], g: [94, 126], w: [33, 85], m: [31, 23], c: [107, 76], r: [162, 60], k: [91, 26] },
  { b: [160, 164], y: [52, 169], g: [93, 129], w: [33, 86], m: [32, 25], c: [105, 75], r: [164, 62], k: [98, 24] },
  { b: [160, 165], y: [48, 173], g: [92, 134], w: [35, 89], m: [37, 28], c: [104, 74], r: [164, 62], k: [106, 20] },
  { b: [160, 165], y: [44, 173], g: [89, 138], w: [35, 92], m: [37, 30], c: [102, 75], r: [164, 65], k: [112, 20] },
  { b: [161, 165], y: [43, 174], g: [89, 141], w: [35, 92], m: [37, 31], c: [100, 77], r: [166, 67], k: [116, 21] },
  { b: [161, 165], y: [43, 174], g: [89, 142], w: [35, 92], m: [38, 30], c: [100, 78], r: [166, 69], k: [121, 21] }
];

function add(parent, name, attrs, text) {
  const el = document.createElementNS(NS, name);
  for (const k in attrs) el.setAttribute(k, attrs[k]);
  if (text !== undefined) el.textContent = text;
  parent.appendChild(el);
  return el;
}

function nearest(p, centres) {
  let best, min = Infinity;
  for (const c in centres) {
    const d = (p.x - centres[c][0]) ** 2 + (p.y - centres[c][1]) ** 2;
    if (d < min) { min = d; best = c; }
  }
  return best;
}

function star(cx, cy, r) {
  let d = '';
  for (let i = 0; i < 10; i++) {
    const a = Math.PI * i / 5, q = i % 2 ? r * 0.4 : r;
    d += `${(cx + q * Math.sin(a)).toFixed(1)},${(cy - q * Math.cos(a)).toFixed(1)} `;
  }
  return d;
}

const W = 315, H = 198;
CENTRES.forEach((centres, i) => {
  const svg = add(document.getElementById('axes'), 'svg', { viewBox: `0 0 ${W + 1} ${H + 1}` });
  add(svg, 'rect', { x: 0.5, y: 0.5, width: W, height: H, fill: '#fff' });
  const data = add(svg, 'svg', { x: 0.5, y: 0.5, width: W, height: H, style: 'overflow:hidden' });
  POINTS.forEach(p => {
    const c = i ? nearest(p, CENTRES[i - 1]) : p.c;
    add(data, 'circle', { cx: p.x / 200 * W, cy: H - p.y / 200 * H, r: 3.2, fill: COLORS[c], stroke: '#000', 'stroke-width': 0.7 });
  });
  for (const c in centres) {
    add(data, 'polygon', { points: star(centres[c][0] / 200 * W, H - centres[c][1] / 200 * H, 3.6), fill: COLORS[c], stroke: '#000', 'stroke-width': 0.6 });
  }
  add(svg, 'rect', { x: 0.5, y: 0.5, width: W, height: H, fill: 'none', stroke: '#000' });
  for (let t = 0; t <= 200; t += 50) {
    const x = Math.round(t / 200 * W) + 0.5, y = H - Math.round(t / 200 * H) + 0.5;
    add(svg, 'path', { d: `M${x} 0v4M${x} ${H + 1}v-4M0 ${y}h4M${W + 1} ${y}h-4`, stroke: '#000', 'stroke-width': 0.6 });
    add(svg, 'text', { x, y: H + 16, 'text-anchor': 'middle' }, t);
    add(svg, 'text', { x: -4, y: y + 3, 'text-anchor': 'end' }, t);
  }
});

const CM = 37.8;
const h = document.getElementById('hruler');
add(h, 'rect', { x: 77, y: 3, width: 643, height: 17, fill: '#fff' });
add(h, 'path', { d: 'M77 3.500H1.500v16H77M720 3.500h74v16h-74v-16', fill: 'none', stroke: '#aaa' });
for (let n = -1; n <= 18; n++) {
  const x = 77 + n * CM;
  if (n) add(h, 'text', { x, y: 15 }, Math.abs(n));
  if (n && n !== 17) add(h, 'path', { d: `M${x} 3v2M${x} 17v2`, stroke: '#aaa' });
  add(h, 'path', { d: `M${x + CM / 2} 8v5`, stroke: '#aaa' });
  if (n > -1 && n < 13) add(h, 'path', { d: `M${124 + n * 47} 17v3M${121 + n * 47} 20.500h6`, stroke: '#777' });
}
add(h, 'path', { d: 'M-19 0', stroke: '#aaa' });
add(h, 'path', { d: `M${77 - 1.5 * CM} 8v5`, stroke: '#aaa' });
add(h, 'path', { d: 'M72 2.500h10v3l-5 6-5-6zM77 11.500l5 5v4H72v-4zM720 11.500l5 5v4h-10v-4z', fill: '#f4f4f4', stroke: '#777' });

const v = document.getElementById('vruler');
add(v, 'rect', { x: 0.5, y: 0.5, width: 16, height: 76, fill: '#f1f0ef', stroke: '#aaa' });
for (let n = -1; n <= 13; n++) {
  const y = 76 + n * CM;
  if (n) add(v, 'text', { x: 0, y: 0, transform: `translate(13 ${y}) rotate(-90)` }, Math.abs(n));
  if (n) add(v, 'path', { d: `M0 ${y}h2M15 ${y}h2`, stroke: '#aaa' });
  add(v, 'path', { d: `M5 ${y + CM / 2}h5`, stroke: '#999' });
}
add(v, 'path', { d: `M5 ${76 - 1.5 * CM}h5`, stroke: '#999' });
```
